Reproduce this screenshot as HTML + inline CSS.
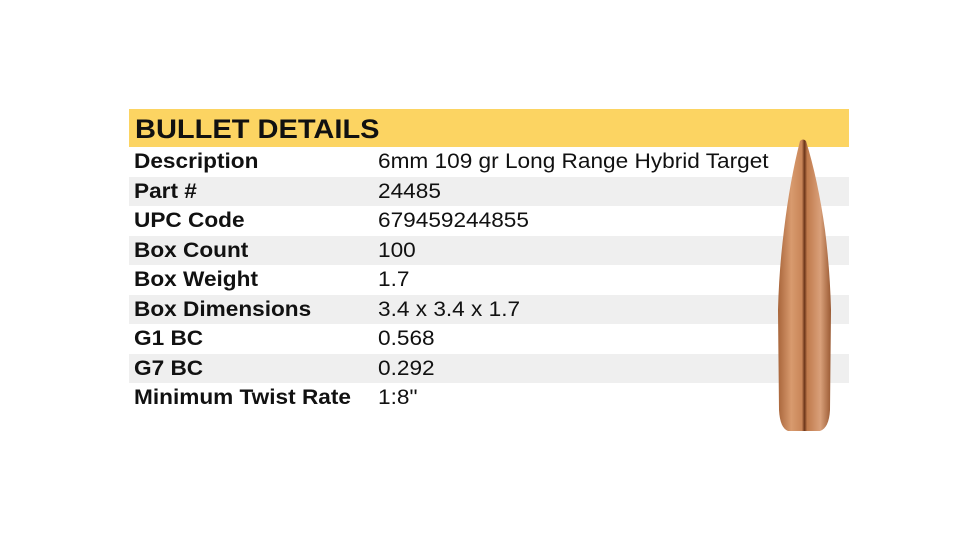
<!DOCTYPE html>
<html><head><style>
body{margin:0;width:978px;height:550px;background:#fff;position:relative;overflow:hidden;font-family:"Liberation Sans",Arial,sans-serif;}
.hd{position:absolute;left:129px;top:109px;width:720px;height:38px;background:#fcd462;}
.hd span{position:absolute;left:6px;top:5px;font-weight:bold;font-size:27px;color:#111;transform:scaleX(1.075);transform-origin:0 0;}
.r{position:absolute;left:129px;width:720px;height:29.5px;font-size:21px;color:#111;}
.r.g{background:#efefef;}
.r b{position:absolute;left:5px;top:3px;transform:scaleX(1.077);transform-origin:0 0;white-space:nowrap;}
.r i{font-style:normal;position:absolute;left:249px;top:3px;transform:scaleX(1.077);transform-origin:0 0;white-space:nowrap;}
</style></head><body>
<div class="hd"><span>BULLET DETAILS</span></div>
<div class="r" style="top:147px"><b>Description</b><i>6mm 109 gr Long Range Hybrid Target</i></div>
<div class="r g" style="top:176.5px"><b>Part #</b><i>24485</i></div>
<div class="r" style="top:206px"><b>UPC Code</b><i>679459244855</i></div>
<div class="r g" style="top:235.5px"><b>Box Count</b><i>100</i></div>
<div class="r" style="top:265px"><b>Box Weight</b><i>1.7</i></div>
<div class="r g" style="top:294.5px"><b>Box Dimensions</b><i>3.4 x 3.4 x 1.7</i></div>
<div class="r" style="top:324px"><b>G1 BC</b><i>0.568</i></div>
<div class="r g" style="top:353.5px"><b>G7 BC</b><i>0.292</i></div>
<div class="r" style="top:383px"><b>Minimum Twist Rate</b><i>1:8"</i></div>
<svg style="position:absolute;left:0;top:0" width="978" height="550">
<defs><linearGradient id="b" x1="0" x2="1">
<stop offset="0" stop-color="#a8653a"/><stop offset="0.25" stop-color="#d89a6e"/><stop offset="0.45" stop-color="#c98558"/><stop offset="0.5" stop-color="#6a3418"/><stop offset="0.55" stop-color="#c07a4c"/><stop offset="0.8" stop-color="#d9a07a"/><stop offset="1" stop-color="#9a5a33"/></linearGradient></defs>
<path d="M800,141 Q803,138 806,141 Q818,180 825,230 Q830,270 831,310 L830,410 Q829,428 820,431 L788,431 Q780,428 779,410 L778,310 Q779,270 784,230 Q790,180 800,141 Z" fill="url(#b)"/>
</svg>
</body></html>
